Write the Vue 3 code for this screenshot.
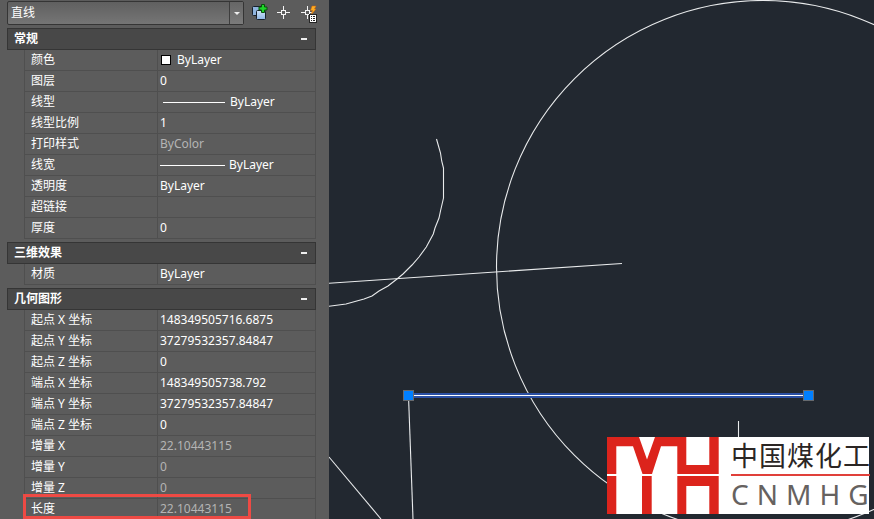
<script setup>
import { ref, reactive } from 'vue'

const objectType = ref('直线')

const sections = reactive([
  {
    title: '常规',
    open: true,
    rows: [
      { label: '颜色', value: 'ByLayer', kind: 'swatch' },
      { label: '图层', value: '0' },
      { label: '线型', value: 'ByLayer', kind: 'linetype' },
      { label: '线型比例', value: '1' },
      { label: '打印样式', value: 'ByColor', muted: true },
      { label: '线宽', value: 'ByLayer', kind: 'lineweight' },
      { label: '透明度', value: 'ByLayer' },
      { label: '超链接', value: '' },
      { label: '厚度', value: '0' }
    ]
  },
  {
    title: '三维效果',
    open: true,
    rows: [{ label: '材质', value: 'ByLayer' }]
  },
  {
    title: '几何图形',
    open: true,
    marked: true,
    rows: [
      { label: '起点 X 坐标', value: '148349505716.6875' },
      { label: '起点 Y 坐标', value: '37279532357.84847' },
      { label: '起点 Z 坐标', value: '0' },
      { label: '端点 X 坐标', value: '148349505738.792' },
      { label: '端点 Y 坐标', value: '37279532357.84847' },
      { label: '端点 Z 坐标', value: '0' },
      { label: '增量 X', value: '22.10443115', muted: true },
      { label: '增量 Y', value: '0', muted: true },
      { label: '增量 Z', value: '0', muted: true },
      { label: '长度', value: '22.10443115', muted: true }
    ]
  }
])
</script>

<template>
  <div class="workspace">
    <aside class="panel">
      <div class="toolbar">
        <div class="combo">
          <select v-model="objectType" aria-label="对象类型">
            <option>直线</option>
          </select>
          <span class="combo-arrow"></span>
        </div>
        <button class="tool" type="button" aria-label="PICKADD">
          <svg width="18" height="20" viewBox="0 0 18 20">
            <defs>
              <linearGradient id="sheet" x1="0" y1="0" x2="0" y2="1">
                <stop offset="0" stop-color="#cfe3f8" />
                <stop offset="1" stop-color="#8db6e6" />
              </linearGradient>
            </defs>
            <rect x="1.5" y="3.5" width="10" height="9" rx="1" fill="#8fb4de" stroke="#17202b" />
            <rect x="5.5" y="7.5" width="9" height="9" rx="1" fill="url(#sheet)" stroke="#17202b" />
            <path d="M10.5 1.5h3v2.500h2.500v3h-2.500v2.500h-3v-2.500h-2.500v-3h2.500z" fill="#1fd32a" stroke="#07510b" />
          </svg>
        </button>
        <button class="tool" type="button" aria-label="选择对象">
          <svg width="18" height="20" viewBox="0 0 18 20" fill="none" stroke="#f4f4f4">
            <path d="M2 9.5h4M11 9.5h4M8.5 3v4M8.5 12v4" />
            <rect x="6.5" y="7.5" width="4" height="4" />
          </svg>
        </button>
        <button class="tool" type="button" aria-label="快速选择">
          <svg width="18" height="20" viewBox="0 0 18 20">
            <path d="M2 9.5h4M11 9.5h2M8.5 3v4M8.5 12v4" stroke="#f4f4f4" />
            <rect x="6.5" y="7.5" width="4" height="4" fill="none" stroke="#f4f4f4" />
            <path d="M13 3h4l-1.500 3H17l-5 6 1.500-4.500h-2z" fill="#ffad22" stroke="#c8620c" stroke-width=".5" />
            <rect x="10.5" y="11.5" width="7" height="8" fill="#fff" stroke="#252525" />
            <path d="M12 13.5h1M14 13.5h2M12 15.5h1M14 15.5h2M12 17.5h1M14 17.5h2" stroke="#222" />
          </svg>
        </button>
      </div>

      <section v-for="s in sections" :key="s.title" class="group">
        <button class="group-head" type="button" :aria-expanded="s.open" @click="s.open = !s.open">
          <span>{{ s.title }}</span>
          <span class="sign" :class="{ closed: !s.open }"></span>
        </button>
        <div v-if="s.open" class="group-body">
          <table>
            <tbody>
              <tr v-for="r in s.rows" :key="r.label">
                <th scope="row">{{ r.label }}</th>
                <td :class="{ muted: r.muted }">
                  <div class="value">
                    <i v-if="r.kind" :class="r.kind"></i>
                    <span>{{ r.value }}</span>
                  </div>
                </td>
              </tr>
            </tbody>
          </table>
          <div v-if="s.marked" class="marker"></div>
        </div>
      </section>
    </aside>

    <main class="drawing">
      <svg class="entities" width="100%" height="100%">
        <g fill="none" stroke="#e9ebec" stroke-width="1.1">
          <circle cx="434" cy="267" r="266.5" />
          <polyline points="107.5,139 111.5,153 112.7,161 114.5,168 114.5,198 111.7,210 110,218 106,228 104.3,234 97.3,247 90,257 83,265 74,274 68,279 59,286 50,291 43,296 35,299 17,304 0,306.3" />
          <path d="M0 283.2L293 263.5" />
          <path d="M0 457L52 519" />
          <path d="M79.5 396L84 519" />
          <path d="M409.5 421V440" />
        </g>
        <path d="M80 395.5H479" stroke="#2b50a4" stroke-width="5" />
        <path d="M80 395.5H479" stroke="#fff" stroke-width="1" />
        <g fill="#007fff" stroke="#66696d">
          <rect x="74.5" y="390.5" width="10" height="10" />
          <rect x="474.5" y="390.5" width="10" height="10" />
        </g>
      </svg>

      <div class="brand">
        <svg class="brand-mark" width="112" height="77" viewBox="0 0 112 77" fill="#dc241c">
          <path d="M0 0H32L40 22.5 48 0H79.3V28H102.3V0H111.7V37H70.3V9.3H54L45 37H35.5L26 9.3H9.3V37H0z" />
          <path d="M0 39H9.3V77H0zM35 39H44.7V77H35z" />
          <path d="M70.3 39H111.7V77H102.3V49H79.3V77H70.3z" />
        </svg>
        <div class="brand-text">
          <div class="brand-cn"><span v-for="c in '中国煤化工'" :key="c">{{ c }}</span></div>
          <div class="brand-en"><span v-for="c in 'CNMHG'" :key="c">{{ c }}</span></div>
        </div>
      </div>
    </main>
  </div>
</template>

<style>
body {
  margin: 0;
  overflow: hidden;
}
</style>

<style scoped>
.workspace {
  display: flex;
  height: 100vh;
  overflow: hidden;
  background: #222830;
  font-family: "Noto Sans", "Noto Sans CJK SC", sans-serif;
  font-size: 12px;
  line-height: 20px;
  color: #fff;
}

.panel {
  box-sizing: border-box;
  flex: none;
  width: 329px;
  padding: 1px 13px 0 7px;
  background: #5c5c5c;
  overflow: hidden;
}

button {
  margin: 0;
  padding: 0;
  border: 0;
  background: none;
  color: inherit;
  font: inherit;
}

.toolbar {
  display: flex;
  align-items: center;
  gap: 6px;
  height: 24px;
  margin: 0 -1px 3px 0;
}

.combo {
  display: flex;
  flex: 1;
  box-sizing: border-box;
  height: 24px;
  margin-right: 1px;
  border: 1px solid #353535;
  border-radius: 2px;
  background: linear-gradient(#606060, #757575);
}

.combo select {
  flex: 1;
  appearance: none;
  margin: 0;
  padding: 0 3px;
  border: 0;
  background: none;
  color: #fff;
  font: inherit;
}

.combo-arrow {
  display: flex;
  align-items: center;
  justify-content: center;
  width: 13px;
  border-left: 1px solid #3d3d3d;
  background: linear-gradient(#666, #7b7b7b);
}

.combo-arrow::after {
  content: "";
  border: 3px solid transparent;
  border-top-color: #eee;
  border-bottom: 0;
}

.tool {
  display: flex;
  width: 18px;
}

.group {
  margin-bottom: 3px;
}

.group-head {
  box-sizing: border-box;
  display: flex;
  align-items: center;
  justify-content: space-between;
  width: 100%;
  height: 22px;
  padding: 0 8px 0 6px;
  border: 1px solid #353535;
  background: #484848;
  font-weight: 700;
}

.sign {
  width: 6px;
  height: 2px;
  background: #eee;
}

.sign.closed {
  height: 6px;
}

.group-body {
  position: relative;
  margin-left: 17px;
}

table {
  width: 100%;
  table-layout: fixed;
  border-collapse: separate;
  border-spacing: 0;
  border-left: 1px solid #4f4f4f;
}

th,
td {
  box-sizing: border-box;
  height: 21px;
  padding: 0;
  border-right: 1px solid #4f4f4f;
  border-bottom: 1px solid #4f4f4f;
  font-weight: 400;
  text-align: left;
  white-space: nowrap;
}

th {
  width: 133px;
  padding-left: 6px;
}

td {
  padding-left: 2px;
}

.value {
  display: flex;
  align-items: center;
  height: 20px;
}

.muted {
  color: #b4b4b4;
}

.swatch {
  box-sizing: border-box;
  width: 10px;
  height: 10px;
  margin: 0 6px 0 1px;
  border: 1px solid #000;
  background: #fff;
}

.linetype,
.lineweight {
  width: 62px;
  height: 1px;
  margin: 0 5px 0 3px;
  background: #fff;
}

.lineweight {
  width: 65px;
  margin: 0 4px 0 0;
}

.marker {
  position: absolute;
  left: -1px;
  bottom: 1px;
  box-sizing: border-box;
  width: 228px;
  height: 25px;
  border: 3px solid #ee4a44;
}

.drawing {
  position: relative;
  flex: 1;
  min-width: 0;
  overflow: hidden;
}

.entities {
  display: block;
}

.brand {
  position: absolute;
  right: 5px;
  bottom: 5px;
  display: flex;
  gap: 12px;
  width: 262px;
  height: 77px;
  background: #fff;
}

.brand-mark {
  flex: none;
}

.brand-text {
  flex: none;
}

.brand-cn {
  display: flex;
  gap: 1px;
  height: 37px;
  border-bottom: 2px solid #e0403a;
  color: #2b2624;
  font-family: "Noto Sans CJK SC", sans-serif;
  font-size: 27px;
  line-height: 36px;
}

.brand-en {
  display: flex;
  gap: 8px;
  color: #666260;
  font-size: 28px;
  line-height: 36px;
}
</style>
